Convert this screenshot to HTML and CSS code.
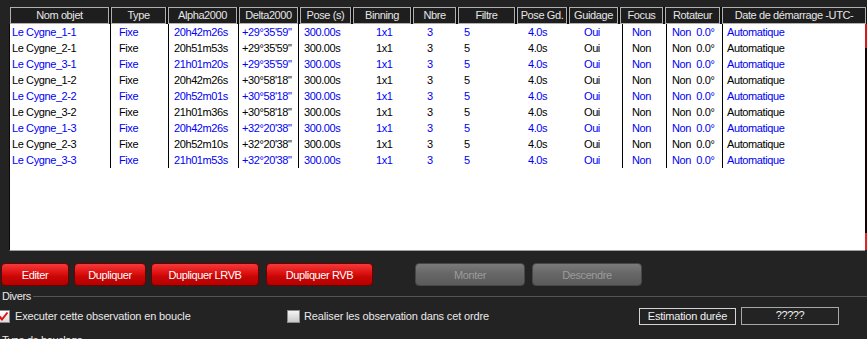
FILE: index.html
```html
<!DOCTYPE html>
<html lang="fr">
<head>
<meta charset="utf-8">
<title>Observations</title>
<link rel="stylesheet" href="styles.css">
</head>
<body>
<div class="page">
  <div class="thead">
    <div class="th">Nom objet</div>
    <div class="th">Type</div>
    <div class="th">Alpha2000</div>
    <div class="th">Delta2000</div>
    <div class="th">Pose (s)</div>
    <div class="th">Binning</div>
    <div class="th">Nbre</div>
    <div class="th">Filtre</div>
    <div class="th">Pose Gd.</div>
    <div class="th">Guidage</div>
    <div class="th">Focus</div>
    <div class="th">Rotateur</div>
    <div class="th">Date de démarrage -UTC-</div>
  </div>
  <div class="tbody">
    <div class="tbody-main">
      <div class="row blue"><div class="td">Le Cygne_1-1</div><div class="td">Fixe</div><div class="td">20h42m26s</div><div class="td">+29°35'59"</div><div class="td">300.00s</div><div class="td">1x1</div><div class="td">3</div><div class="td">5</div><div class="td">4.0s</div><div class="td">Oui</div><div class="td">Non</div><div class="td">Non&nbsp;&nbsp;0.0°</div><div class="td">Automatique</div></div>
      <div class="row"><div class="td">Le Cygne_2-1</div><div class="td">Fixe</div><div class="td">20h51m53s</div><div class="td">+29°35'59"</div><div class="td">300.00s</div><div class="td">1x1</div><div class="td">3</div><div class="td">5</div><div class="td">4.0s</div><div class="td">Oui</div><div class="td">Non</div><div class="td">Non&nbsp;&nbsp;0.0°</div><div class="td">Automatique</div></div>
      <div class="row blue"><div class="td">Le Cygne_3-1</div><div class="td">Fixe</div><div class="td">21h01m20s</div><div class="td">+29°35'59"</div><div class="td">300.00s</div><div class="td">1x1</div><div class="td">3</div><div class="td">5</div><div class="td">4.0s</div><div class="td">Oui</div><div class="td">Non</div><div class="td">Non&nbsp;&nbsp;0.0°</div><div class="td">Automatique</div></div>
      <div class="row"><div class="td">Le Cygne_1-2</div><div class="td">Fixe</div><div class="td">20h42m26s</div><div class="td">+30°58'18"</div><div class="td">300.00s</div><div class="td">1x1</div><div class="td">3</div><div class="td">5</div><div class="td">4.0s</div><div class="td">Oui</div><div class="td">Non</div><div class="td">Non&nbsp;&nbsp;0.0°</div><div class="td">Automatique</div></div>
      <div class="row blue"><div class="td">Le Cygne_2-2</div><div class="td">Fixe</div><div class="td">20h52m01s</div><div class="td">+30°58'18"</div><div class="td">300.00s</div><div class="td">1x1</div><div class="td">3</div><div class="td">5</div><div class="td">4.0s</div><div class="td">Oui</div><div class="td">Non</div><div class="td">Non&nbsp;&nbsp;0.0°</div><div class="td">Automatique</div></div>
      <div class="row"><div class="td">Le Cygne_3-2</div><div class="td">Fixe</div><div class="td">21h01m36s</div><div class="td">+30°58'18"</div><div class="td">300.00s</div><div class="td">1x1</div><div class="td">3</div><div class="td">5</div><div class="td">4.0s</div><div class="td">Oui</div><div class="td">Non</div><div class="td">Non&nbsp;&nbsp;0.0°</div><div class="td">Automatique</div></div>
      <div class="row blue"><div class="td">Le Cygne_1-3</div><div class="td">Fixe</div><div class="td">20h42m26s</div><div class="td">+32°20'38"</div><div class="td">300.00s</div><div class="td">1x1</div><div class="td">3</div><div class="td">5</div><div class="td">4.0s</div><div class="td">Oui</div><div class="td">Non</div><div class="td">Non&nbsp;&nbsp;0.0°</div><div class="td">Automatique</div></div>
      <div class="row"><div class="td">Le Cygne_2-3</div><div class="td">Fixe</div><div class="td">20h52m10s</div><div class="td">+32°20'38"</div><div class="td">300.00s</div><div class="td">1x1</div><div class="td">3</div><div class="td">5</div><div class="td">4.0s</div><div class="td">Oui</div><div class="td">Non</div><div class="td">Non&nbsp;&nbsp;0.0°</div><div class="td">Automatique</div></div>
      <div class="row blue"><div class="td">Le Cygne_3-3</div><div class="td">Fixe</div><div class="td">21h01m53s</div><div class="td">+32°20'38"</div><div class="td">300.00s</div><div class="td">1x1</div><div class="td">3</div><div class="td">5</div><div class="td">4.0s</div><div class="td">Oui</div><div class="td">Non</div><div class="td">Non&nbsp;&nbsp;0.0°</div><div class="td">Automatique</div></div>
    </div>
    <div class="scroll"><div class="scroll-top"></div><div class="scroll-bot"></div></div>
  </div>

  <div class="actions">
    <button class="btn red b-edit">Editer</button>
    <button class="btn red b-dup">Dupliquer</button>
    <button class="btn red b-lrvb">Dupliquer LRVB</button>
    <button class="btn red b-rvb">Dupliquer RVB</button>
    <button class="btn gray b-up" disabled>Monter</button>
    <button class="btn gray b-down" disabled>Descendre</button>
  </div>

  <div class="group">Divers</div>

  <div class="options">
    <div class="opt opt1">
      <span class="box checked"><svg width="13" height="13" viewBox="0 0 13 13"><path d="M2.5 6.5 L5 9.5 L10.5 2.5" fill="none" stroke="#e01010" stroke-width="2"/></svg></span>
      <span class="lbl">Executer cette observation en boucle</span>
    </div>
    <div class="opt opt2">
      <span class="box"></span>
      <span class="lbl">Realiser les observation dans cet ordre</span>
    </div>
    <div class="est">Estimation durée</div>
    <div class="est-val">?????</div>
  </div>

  <div class="type">Type de bouclage</div>
</div>
</body>
</html>
```
FILE: styles.css
```css
* { box-sizing: border-box; }

html, body {
  margin: 0;
  width: 867px;
  height: 339px;
  overflow: hidden;
}

body {
  background: #232323;
  font-family: "Liberation Sans", Arial, sans-serif;
  font-size: 11px;
  letter-spacing: -0.4px;
  color: #e8e8e8;
}

.page { padding-top: 7px; }

/* ---------- header ---------- */
.thead {
  display: grid;
  grid-template-columns: 101px 57px 71px 61px 53px 60px 45px 59px 52px 51px 45px 57px 144px;
  margin-left: 10px;
  height: 17px;
  background: #0e0e0e;
}
.th {
  margin-right: 2px;
  border: 1px solid #b0b0b0;
  background: #1e1e1e;
  color: #e6e6e6;
  text-align: center;
  line-height: 15px;
  white-space: nowrap;
  overflow: hidden;
}
.th:last-child { margin-right: 0; }

/* ---------- body ---------- */
.tbody {
  display: flex;
  margin-left: 9px;
  height: 227px;
}
.tbody-main {
  width: 856px;
  height: 227px;
  background: #fff;
  border-left: 1px solid #0a0a0a;
  border-bottom: 1px solid #a0a0a0;
}
.scroll {
  width: 3px;
  height: 226px;
  background: #140202;
  display: flex;
  flex-direction: column;
  justify-content: space-between;
}
.scroll-top { height: 24px; background: #d81a1a; }
.scroll-bot { height: 17px; background: #e42424; }

.row {
  display: grid;
  grid-template-columns: 101px 58px 70px 60px 54px 60px 45px 58px 53px 54px 44px 56px 142px;
  height: 16px;
  line-height: 16px;
  color: #000;
}
.row.blue { color: #0000f4; }
.td { white-space: nowrap; overflow: hidden; }

.td:nth-child(1)  { padding-left: 2px;  border-right: 1px solid #000; }
.td:nth-child(2)  { padding-left: 8px;  border-right: 1px solid #000; }
.td:nth-child(3)  { padding-left: 5px;  border-right: 1px solid #000; }
.td:nth-child(4)  { padding-left: 3px;  border-right: 1px solid #000; }
.td:nth-child(5)  { padding-left: 5px; }
.td:nth-child(6)  { padding-left: 23px; }
.td:nth-child(7)  { padding-left: 14px; }
.td:nth-child(8)  { padding-left: 6px; }
.td:nth-child(9)  { padding-left: 12px; }
.td:nth-child(10) { padding-left: 15px; border-right: 1px solid #000; }
.td:nth-child(11) { padding-left: 9px;  border-right: 1px solid #000; }
.td:nth-child(12) { padding-left: 5px;  border-right: 1px solid #000; }
.td:nth-child(13) { padding-left: 4px; }

/* ---------- buttons ---------- */
.actions {
  display: flex;
  margin-top: 12px;
  padding-left: 1px;
  height: 23px;
}
.btn {
  height: 23px;
  padding: 0;
  border-radius: 4px;
  font: inherit;
  letter-spacing: inherit;
  text-align: center;
}
.btn.red {
  border: 1px solid #6e0000;
  background: linear-gradient(#f43a3a 0%, #e01414 40%, #c80606 60%, #b40000 100%);
  color: #fff;
}
.btn.gray {
  border: 1px solid #474747;
  background: linear-gradient(#7a7a7a 0%, #676767 45%, #5a5a5a 100%);
  color: #9c9c9c;
}
.b-edit { width: 68px; }
.b-dup  { width: 72px;  margin-left: 5px; }
.b-lrvb { width: 108px; margin-left: 5px; }
.b-rvb  { width: 107px; margin-left: 7px; }
.b-up   { width: 110px; margin-left: 42px; }
.b-down { width: 110px; margin-left: 7px; }

/* ---------- Divers ---------- */
.group {
  display: flex;
  align-items: center;
  margin-top: 4px;
  height: 13px;
  line-height: 13px;
  padding-left: 2px;
}
.group::after {
  content: "";
  flex: 1;
  border-top: 1px solid #555;
  margin-left: 2px;
}

.options {
  display: flex;
  align-items: center;
  height: 18px;
  margin-top: 4px;
}
.opt { display: flex; align-items: center; }
.opt1 { flex: 0 0 290px; margin-left: -3px; }
.opt2 { flex: 0 0 352px; }
.box {
  width: 13px;
  height: 13px;
  border: 1px solid #8a8a8a;
  background: linear-gradient(#f4f4f4, #c8c8c8);
  display: block;
}
.box.checked { background: linear-gradient(#ffffff, #dcdcdc); }
.box svg { display: block; margin: -1px; }
.lbl { margin-left: 5px; white-space: nowrap; letter-spacing: -0.15px; }
.opt2 .lbl { margin-left: 4px; }

.est {
  width: 97px;
  height: 17px;
  border: 1px solid #d4d4d4;
  text-align: center;
  line-height: 15px;
  color: #f0f0f0;
  letter-spacing: -0.2px;
}
.est-val {
  width: 98px;
  height: 18px;
  margin-left: 5px;
  border: 1px solid #a8a8a8;
  text-align: center;
  line-height: 15px;
  color: #f0f0f0;
}

.type {
  margin-top: 9px;
  padding-left: 2px;
  line-height: 13px;
}
```
